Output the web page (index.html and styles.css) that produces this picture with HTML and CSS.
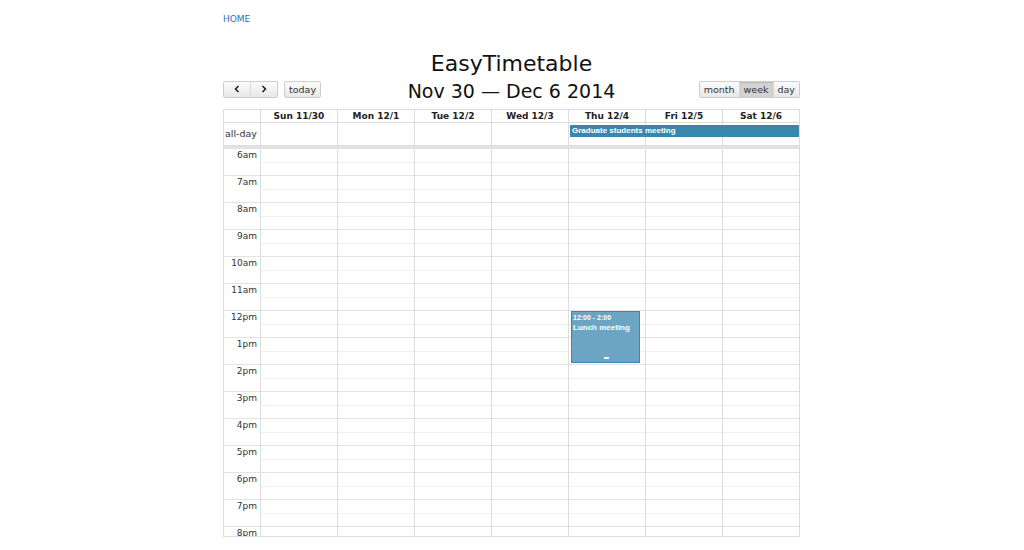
FILE: index.html
```html
<!DOCTYPE html>
<html>
<head>
<meta charset="utf-8">
<title>EasyTimetable</title>
<link rel="stylesheet" href="styles.css">
</head>
<body>
<div class="page">
  <nav class="topnav"><a href="#" class="home">HOME</a></nav>
  <h1 class="app-title">EasyTimetable</h1>
  <div class="toolbar">
    <div class="tb-left">
      <div class="btn-group">
        <button class="btn"><svg width="8" height="8" viewBox="0 0 8 8"><path d="M5.5 1 L2.5 4 L5.5 7" fill="none" stroke="#111" stroke-width="1.4"/></svg></button>
        <button class="btn"><svg width="8" height="8" viewBox="0 0 8 8"><path d="M2.5 1 L5.5 4 L2.5 7" fill="none" stroke="#111" stroke-width="1.4"/></svg></button>
      </div>
      <button class="btn single">today</button>
    </div>
    <h2 class="range">Nov 30 — Dec 6 2014</h2>
    <div class="tb-right">
      <div class="btn-group">
        <button class="btn">month</button>
        <button class="btn active">week</button>
        <button class="btn">day</button>
      </div>
    </div>
  </div>

  <div class="cal">
    <div class="row head">
      <div class="axis"></div>
      <div class="day">Sun 11/30</div>
      <div class="day">Mon 12/1</div>
      <div class="day">Tue 12/2</div>
      <div class="day">Wed 12/3</div>
      <div class="day">Thu 12/4</div>
      <div class="day">Fri 12/5</div>
      <div class="day">Sat 12/6</div>
    </div>
    <div class="row allday">
      <div class="axis">all-day</div>
      <div class="day"></div><div class="day"></div><div class="day"></div><div class="day"></div>
      <div class="day"></div><div class="day"></div><div class="day"></div>
      <div class="allday-event">Graduate students meeting</div>
    </div>
    <div class="divider"></div>
    <div class="body">
      <div class="cols">
        <div class="axis"></div>
        <div class="day"></div><div class="day"></div><div class="day"></div><div class="day"></div>
        <div class="day col-thu">
          <div class="event">
            <div class="ev-time">12:00 - 2:00</div>
            <div class="ev-title">Lunch meeting</div>
            <div class="ev-handle"></div>
          </div>
        </div>
        <div class="day"></div><div class="day"></div>
      </div>
      <div class="hours">
        <div class="hour"><span class="lbl">6am</span></div>
        <div class="hour"><span class="lbl">7am</span></div>
        <div class="hour"><span class="lbl">8am</span></div>
        <div class="hour"><span class="lbl">9am</span></div>
        <div class="hour"><span class="lbl">10am</span></div>
        <div class="hour"><span class="lbl">11am</span></div>
        <div class="hour"><span class="lbl">12pm</span></div>
        <div class="hour"><span class="lbl">1pm</span></div>
        <div class="hour"><span class="lbl">2pm</span></div>
        <div class="hour"><span class="lbl">3pm</span></div>
        <div class="hour"><span class="lbl">4pm</span></div>
        <div class="hour"><span class="lbl">5pm</span></div>
        <div class="hour"><span class="lbl">6pm</span></div>
        <div class="hour"><span class="lbl">7pm</span></div>
        <div class="hour"><span class="lbl">8pm</span></div>
      </div>
    </div>
  </div>
</div>
</body>
</html>
```

FILE: styles.css
```css
* { box-sizing: border-box; }
html, body { margin: 0; padding: 0; background: #fff; height: 550px; overflow: hidden; }
body { font-family: "DejaVu Sans", "Liberation Sans", sans-serif; color: #222; }

.page { width: 577px; margin-left: calc(50% - 289px); }

.topnav { padding-top: 7px; height: 28px; }
.home { font-size: 9px; color: #2f6fb6; text-decoration: none; }

.app-title { margin: 23px 0 0; text-align: center; font-weight: normal; font-size: 22px; line-height: 26px; color: #111; }

.toolbar { display: flex; align-items: center; justify-content: space-between; height: 28px; margin-top: -2px; }
.tb-left { display: flex; gap: 6px; width: 120px; }
.tb-right { display: flex; justify-content: flex-end; width: 120px; }
.range { margin: 3px 0 0; font-weight: normal; font-size: 19px; color: #111; line-height: 24px; }

.btn-group { display: flex; }
.btn {
  height: 17px; padding: 0 4px; font-family: inherit; font-size: 9.5px; color: #333;
  background: linear-gradient(#fbfbfb, #e8e8e8); border: 1px solid #cdcdcd;
  border-radius: 0; display: flex; align-items: center; justify-content: center; margin: 0;
}
.btn-group .btn + .btn { border-left: 1px solid #d8d8d8; margin-left: -1px; }
.btn-group .btn:first-child { border-radius: 2px 0 0 2px; }
.btn-group .btn:last-child { border-radius: 0 2px 2px 0; }
.tb-left .btn-group .btn { width: 28px; }
.btn.single { border-radius: 2px; width: 37px; }
.btn.active { background: #d3d3d3; box-shadow: inset 0 1px 2px rgba(0,0,0,0.12); }

.cal { margin-top: 6px; border: 1px solid #ddd; font-size: 9.5px; }
.row { display: grid; grid-template-columns: 36px repeat(7, 1fr); position: relative; }
.row .day, .row .axis { border-left: 1px solid #ddd; }
.row .axis { border-left: none; }
.head { height: 13px; border-bottom: 1px solid #ddd; }
.head .day { font-weight: bold; text-align: center; line-height: 12px; font-size: 9px; color: #222; }
.allday { height: 22px; }
.allday .axis { text-align: right; padding-right: 3px; line-height: 22px; color: #333; font-size: 9.5px; }
.allday-event {
  position: absolute; left: 346px; right: 0; top: 2px; height: 12px;
  background: #3a87ad; border: 1px solid #3a87ad; color: #fff; font-weight: bold;
  font-family: "Liberation Sans", sans-serif;
  font-size: 8px; line-height: 10px; padding-left: 1px; white-space: nowrap; overflow: hidden;
}
.divider { height: 4px; background: #e2e2e2; border-top: 1px solid #ddd; }

.body { position: relative; height: 387px; overflow: hidden; }
.cols { position: absolute; inset: 0; display: grid; grid-template-columns: 36px repeat(7, 1fr); z-index: 1; }
.cols .day { border-left: 1px solid #ddd; position: relative; }
.hours { display: flex; flex-direction: column; }
.hour { height: 27px; border-bottom: 1px solid #e3e3e3; position: relative; flex-shrink: 0; }
.hour::after { content: ""; position: absolute; left: 36px; right: 0; top: 13px; border-top: 1px solid #f0f0f0; }
.lbl { display: block; width: 36px; text-align: right; padding-right: 3px; line-height: 12px; font-size: 9px; color: #333; }

.event {
  position: absolute; left: 2px; right: 5px; top: 162px; height: 52px;
  background: #6ba5c3; border: 1px solid #3a87ad; color: #fff; padding: 1px 1px;
  font-family: "Liberation Sans", sans-serif; font-weight: bold; white-space: nowrap; overflow: hidden;
}
.ev-time { font-size: 7px; line-height: 9px; }
.ev-title { font-size: 8px; line-height: 11px; }
.ev-handle { position: absolute; left: 50%; bottom: 3px; width: 5px; height: 2px; margin-left: -2px; background: #fff; }
```
